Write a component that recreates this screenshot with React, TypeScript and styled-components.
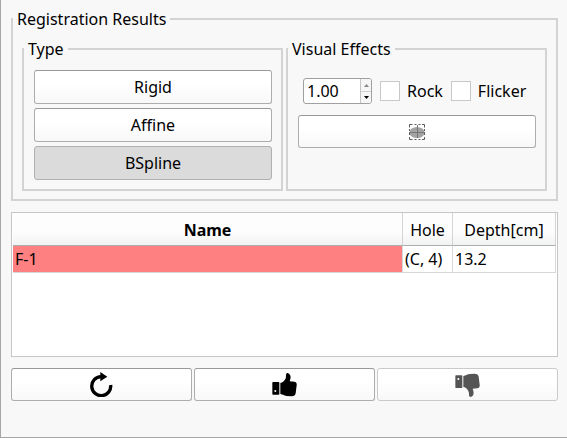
import React, { useState } from "react";
import styled, { createGlobalStyle, css } from "styled-components";

const GlobalStyle = createGlobalStyle`
  *, *::before, *::after { box-sizing: border-box; }
  body {
    margin: 0;
    background: #f8f8f8;
    color: #000;
    font: 16px/22px "Noto Sans", "Open Sans", sans-serif;
  }
  button, input { font: inherit; color: inherit; }
`;

const Panel = styled.main`
  display: flex;
  flex-direction: column;
  gap: 11px;
  min-height: 100vh;
  padding: 8px 9px 0 10px;
  border-left: 1px solid #a6a6a6;
  border-bottom: 1px solid #a6a6a6;
`;

const Group = styled.fieldset`
  display: flex;
  flex-direction: column;
  min-width: 0;
  margin: 0;
  padding: 0;
  border: 2px solid #d3d3d3;
`;

const Legend = styled.legend`
  padding: 0 4px;
`;

const Columns = styled.div`
  display: grid;
  grid-template-columns: 1fr 1fr;
  gap: 3px;
  padding: 8px 9px;
`;

const TypeList = styled.div`
  display: flex;
  flex: 1;
  flex-direction: column;
  gap: 4px;
  padding: 10px 9px 9px 10px;
`;

const PushButton = styled.button<{ $pressed?: boolean; $tall?: boolean }>`
  display: flex;
  align-items: center;
  justify-content: center;
  width: 100%;
  height: ${(p) => (p.$tall ? 34 : 33)}px;
  padding: 0;
  border: 1px solid #adadad;
  border-top-color: #999;
  border-radius: 3px;
  background: linear-gradient(#fff 40%, #f8f8f8);
  ${(p) =>
    p.$pressed &&
    css`
      border-color: #b0b0b0;
      background: #dbdbdb;
    `}
  &:disabled {
    border-color: #cacaca;
    color: #555;
  }
`;

const EffectsBody = styled.div`
  display: flex;
  flex-direction: column;
  gap: 11px;
  padding: 18px 9px 9px 10px;
`;

const EffectsRow = styled.div`
  display: flex;
  align-items: center;
  gap: 8px;
  padding-left: 5px;
`;

const SpinBox = styled.div`
  display: flex;
  width: 69px;
  height: 26px;
  overflow: hidden;
  border: 1px solid #a0a0a0;
  border-radius: 3px;
  background: #fff;
`;

const SpinInput = styled.input`
  flex: 1;
  min-width: 0;
  padding: 0 3px;
  border: 0;
  outline: 0;
  background: transparent;
`;

const SpinArrows = styled.div`
  display: grid;
  grid-template-rows: 1fr 1fr;
  width: 11px;
  border-left: 1px solid #c4c4c4;
`;

const SpinArrow = styled.button`
  display: grid;
  place-items: center;
  padding: 0;
  border: 0;
  background: #f6f6f6;
  & + & { border-top: 1px solid #d0d0d0; }
`;

const CheckLabel = styled.label`
  display: flex;
  align-items: center;
  gap: 7px;
`;

const CheckBox = styled.input`
  appearance: none;
  width: 20px;
  height: 20px;
  margin: 0;
  border: 1px solid #c8c8c8;
  background: #fff;
  &:checked { background: #777; box-shadow: inset 0 0 0 4px #fff; }
`;

const TableFrame = styled.div`
  height: 145px;
  padding: 0 1px;
  border: 1px solid #c6c6c6;
  background: #fff;
`;

const Table = styled.table`
  width: 100%;
  table-layout: fixed;
  border-collapse: separate;
  border-spacing: 0;
`;

const Col = styled.col<{ $width?: number }>`
  width: ${(p) => (p.$width ? `${p.$width}px` : "auto")};
`;

const HeadCell = styled.th<{ $strong?: boolean }>`
  height: 33px;
  padding: 2px 0 0;
  border-right: 1px solid #d4d4d4;
  border-bottom: 1px solid #a9b0b2;
  background: linear-gradient(#fdfdfd 60%, #f2f2f2);
  font-weight: ${(p) => (p.$strong ? 700 : 400)};
`;

const Cell = styled.td<{ $marked?: boolean }>`
  height: 27px;
  padding: 0 2px;
  border-right: 1px solid #d8d8d8;
  border-bottom: 1px solid #d8d8d8;
  background: ${(p) => (p.$marked ? "#ff8080" : "#fff")};
  white-space: nowrap;
`;

const Actions = styled.div`
  display: grid;
  grid-template-columns: repeat(3, 1fr);
  gap: 2px;
`;

const FlippedIcon = styled.svg`
  transform: scaleY(-1);
`;

const ThumbShape = () => (
  <>
    <path
      fillRule="evenodd"
      d="M3 27H20Q22 27 22 29V63Q22 65 20 65H3Q1 65 1 63V29Q1 27 3 27ZM10 51A3 3 0 1 0 10 57A3 3 0 1 0 10 51Z"
    />
    <path d="M25 30C31 29 35 26 38 21C42 16 42 12 42 5C43 0 47 -1 51 2C57 6 57 14 53 25L67 26C73 27 75 31 74 37L71 61C70 67 66 70 59 70L45 69C38 68 33 65 25 63Z" />
  </>
);

const ThumbUpIcon = () => (
  <svg width="25" height="24" viewBox="0 0 75 72" fill="currentColor" aria-hidden="true">
    <ThumbShape />
  </svg>
);

const ThumbDownIcon = () => (
  <FlippedIcon width="25" height="24" viewBox="0 0 75 72" fill="currentColor" aria-hidden="true">
    <ThumbShape />
  </FlippedIcon>
);

const RetryIcon = () => (
  <svg width="23" height="25" viewBox="0 0 69 75" aria-hidden="true">
    <path d="M62 39A28.5 28.5 0 1 1 33 14" fill="none" stroke="#000" strokeWidth="10" />
    <path d="M31 0L52 14L31 28Z" fill="#000" />
  </svg>
);

const VolumeIcon = () => (
  <svg width="18" height="18" viewBox="0 0 18 18" aria-hidden="true">
    <ellipse cx="9" cy="9.5" rx="7.5" ry="5.5" fill="#a3a3a3" />
    <path d="M1 9.5H17M9.5 2V15" stroke="#777" strokeWidth="1" />
    <path
      d="M1.5 4.5V1.5H4.5M6.5 1.5H8.5M10.5 1.5H12.5M14 1.5H16.5V4.5M16.5 6V8M16.5 10V12M16.5 14V16.5H14M12.5 16.5H10.5M8.5 16.5H6.5M4.5 16.5H1.5V14M1.5 12V10M1.5 8V6"
      fill="none"
      stroke="#5c5c5c"
      strokeWidth="1"
    />
  </svg>
);

const ArrowGlyph = ({ up }: { up?: boolean }) => (
  <svg width="5" height="3" viewBox="0 0 5 3" aria-hidden="true">
    <path d={up ? "M0 3L2.5 0L5 3Z" : "M0 0H5L2.5 3Z"} fill={up ? "#888" : "#000"} />
  </svg>
);

const types = ["Rigid", "Affine", "BSpline"];
const effects = ["Rock", "Flicker"];
const targets = [{ name: "F-1", hole: "(C, 4)", depth: "13.2" }];

export default function App() {
  const [type, setType] = useState("BSpline");
  const [opacity, setOpacity] = useState("1.00");

  const step = (delta: number) =>
    setOpacity((v) => Math.min(1, Math.max(0, (parseFloat(v) || 0) + delta)).toFixed(2));

  return (
    <>
      <GlobalStyle />
      <Panel>
        <Group>
          <Legend>Registration Results</Legend>
          <Columns>
            <Group>
              <Legend>Type</Legend>
              <TypeList>
                {types.map((t) => (
                  <PushButton
                    key={t}
                    type="button"
                    aria-pressed={t === type}
                    $tall
                    $pressed={t === type}
                    onClick={() => setType(t)}
                  >
                    {t}
                  </PushButton>
                ))}
              </TypeList>
            </Group>
            <Group>
              <Legend>Visual Effects</Legend>
              <EffectsBody>
                <EffectsRow>
                  <SpinBox>
                    <SpinInput
                      aria-label="Opacity"
                      value={opacity}
                      onChange={(e) => setOpacity(e.target.value)}
                    />
                    <SpinArrows>
                      <SpinArrow type="button" aria-label="Increase" onClick={() => step(0.05)}>
                        <ArrowGlyph up />
                      </SpinArrow>
                      <SpinArrow type="button" aria-label="Decrease" onClick={() => step(-0.05)}>
                        <ArrowGlyph />
                      </SpinArrow>
                    </SpinArrows>
                  </SpinBox>
                  {effects.map((name) => (
                    <CheckLabel key={name}>
                      <CheckBox type="checkbox" />
                      {name}
                    </CheckLabel>
                  ))}
                </EffectsRow>
                <PushButton type="button" aria-label="Volume view">
                  <VolumeIcon />
                </PushButton>
              </EffectsBody>
            </Group>
          </Columns>
        </Group>

        <TableFrame>
          <Table>
            <colgroup>
              <Col />
              <Col $width={50} />
              <Col $width={103} />
            </colgroup>
            <thead>
              <tr>
                <HeadCell $strong>Name</HeadCell>
                <HeadCell>Hole</HeadCell>
                <HeadCell>Depth[cm]</HeadCell>
              </tr>
            </thead>
            <tbody>
              {targets.map((row) => (
                <tr key={row.name}>
                  <Cell $marked>{row.name}</Cell>
                  <Cell>{row.hole}</Cell>
                  <Cell>{row.depth}</Cell>
                </tr>
              ))}
            </tbody>
          </Table>
        </TableFrame>

        <Actions>
          <PushButton type="button" aria-label="Retry">
            <RetryIcon />
          </PushButton>
          <PushButton type="button" aria-label="Approve">
            <ThumbUpIcon />
          </PushButton>
          <PushButton type="button" aria-label="Reject" disabled>
            <ThumbDownIcon />
          </PushButton>
        </Actions>
      </Panel>
    </>
  );
}
